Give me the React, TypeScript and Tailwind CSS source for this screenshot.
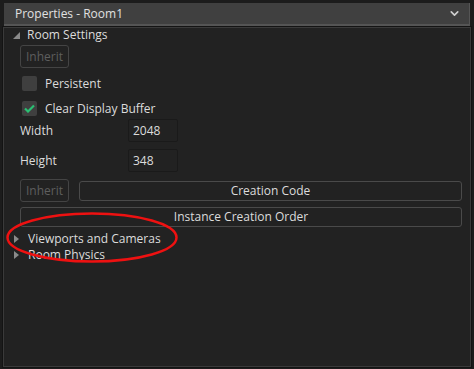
import { ChevronDown } from "lucide-react";

const font = { fontFamily: '"Open Sans", "Noto Sans", sans-serif' };

function Tri({ open }: { open?: boolean }) {
  return open ? (
    <svg width="7" height="7" viewBox="0 0 7 7" className="shrink-0">
      <path d="M7 0 L7 7 L0 7 Z" fill="#8a8a8a" />
    </svg>
  ) : (
    <svg width="5" height="8" viewBox="0 0 5 8" className="shrink-0">
      <path d="M0 0 L5 4 L0 8 Z" fill="#8a8a8a" />
    </svg>
  );
}

function Check({ checked }: { checked?: boolean }) {
  return (
    <div className="w-[15px] h-[15px] rounded-[2px] bg-[#3f3f3f] flex items-center justify-center">
      {checked && (
        <svg width="11" height="9" viewBox="0 0 11 9">
          <path d="M1 4.5 L4 7.5 L10 1.5" stroke="#2bbf73" strokeWidth="2.2" fill="none" />
        </svg>
      )}
    </div>
  );
}

function Inherit() {
  return (
    <div className="w-[49px] h-[23px] border border-[#444] rounded-[3px] flex items-center justify-center text-[#5e5e5e]">
      Inherit
    </div>
  );
}

export default function App() {
  return (
    <div
      className="w-[474px] h-[369px] bg-[#1c1c1c] p-[3px] pb-[2px] text-[12px] text-[#dcdcdc] flex flex-col relative"
      style={font}
    >
      <div className="h-[23px] bg-[#404040] border-b-2 border-[#555] border-r border-r-[#555] flex items-center justify-between pl-[11px] pr-[8px] ml-px mr-[1px]">
        <span className="text-[#e0e0e0]">Properties - Room1</span>
        <ChevronDown size={13} strokeWidth={3} color="#cfcfcf" />
      </div>
      <div className="flex-1 mt-[1px] border border-[#3a3a3a] outline outline-1 outline-[#141414] bg-[#222]">
        <div className="flex items-center h-[14px] pl-[9px] gap-[7px]">
          <Tri open />
          <span>Room Settings</span>
        </div>
        <div className="pl-[16px] pt-[3px]">
          <Inherit />
        </div>
        <div className="flex items-center gap-[8px] pl-[18px] mt-[8px] h-[15px]">
          <Check />
          <span>Persistent</span>
        </div>
        <div className="flex items-center gap-[8px] pl-[18px] mt-[10px] h-[15px]">
          <Check checked />
          <span>Clear Display Buffer</span>
        </div>
        <div className="flex items-center pl-[16px] mt-[3px] h-[23px]">
          <span className="w-[108px]">Width</span>
          <div className="w-[50px] h-[23px] border border-[#1a1a1a] rounded-[2px] flex items-center pl-[4px]">
            2048
          </div>
        </div>
        <div className="flex items-center pl-[16px] mt-[7px] h-[23px]">
          <span className="w-[108px]">Height</span>
          <div className="w-[50px] h-[23px] border border-[#1a1a1a] rounded-[2px] flex items-center pl-[4px]">
            348
          </div>
        </div>
        <div className="flex items-center gap-[10px] pl-[16px] pr-[8px] mt-[7px]">
          <Inherit />
          <div className="flex-1 h-[20px] border border-[#4a4a4a] rounded-[3px] flex items-center justify-center">
            Creation Code
          </div>
        </div>
        <div className="pl-[16px] pr-[8px] mt-[5px]">
          <div className="h-[20px] border border-[#4a4a4a] rounded-[3px] flex items-center justify-center">
            Instance Creation Order
          </div>
        </div>
        <div className="flex items-center h-[16px] pl-[10px] gap-[9px] mt-[4px]">
          <Tri />
          <span>Viewports and Cameras</span>
        </div>
        <div className="flex items-center h-[16px] pl-[10px] gap-[9px]">
          <Tri />
          <span>Room Physics</span>
        </div>
      </div>
      <svg className="absolute left-0 top-0 pointer-events-none" width="474" height="369">
        <ellipse cx="92" cy="237.5" rx="84.5" ry="24" fill="none" stroke="#ee1111" strokeWidth="2.5" />
      </svg>
    </div>
  );
}
